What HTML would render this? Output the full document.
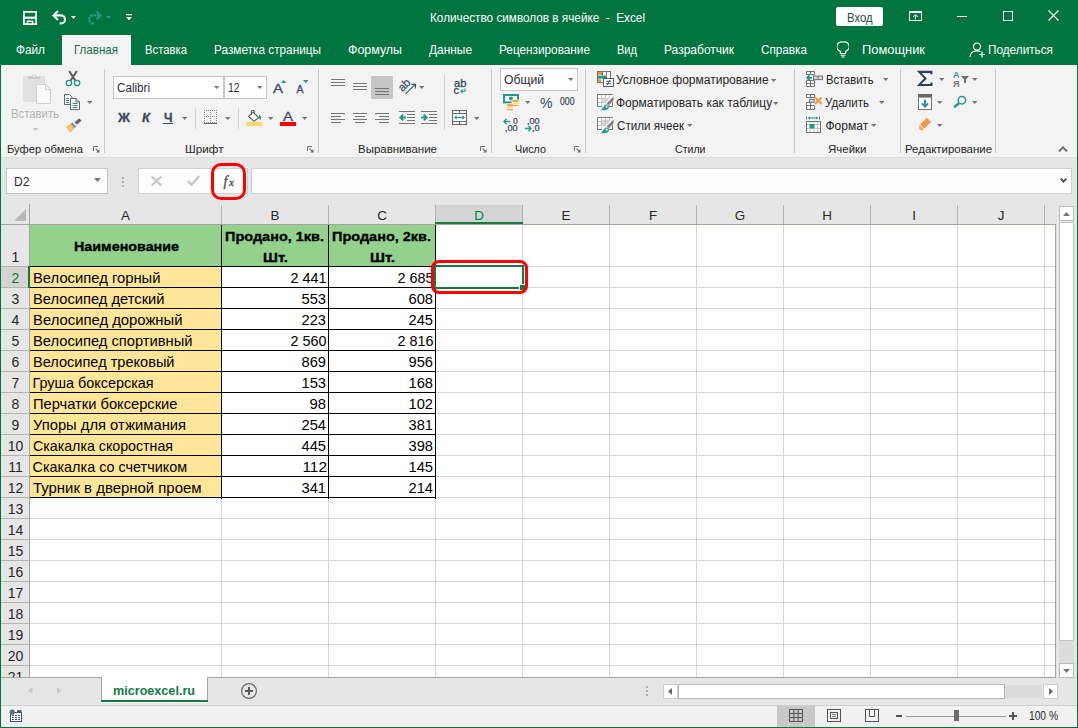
<!DOCTYPE html>
<html lang="ru"><head><meta charset="utf-8"><title>Excel</title>
<style>
html,body{margin:0;padding:0}
body{width:1078px;height:728px;overflow:hidden;position:relative;background:#e6e6e6;font-family:"Liberation Sans",sans-serif}
.a{position:absolute;display:block}
.t{position:absolute;white-space:pre;line-height:normal;display:block}
</style></head><body>
<div class="a" style="left:0px;top:0px;width:1078px;height:65px;background:#00743f;"></div>
<div class="a" style="left:1px;top:65px;width:1076px;height:93px;background:#f3f3f3;"></div>
<div class="a" style="left:1px;top:157px;width:1076px;height:1px;background:#dcdcdc;"></div>
<div class="a" style="left:62px;top:35px;width:69px;height:31px;background:#f3f3f3;"></div>
<svg class="a" style="left:23px;top:11px" width="14" height="14" viewBox="0 0 14 14"><path d="M0.9 0.9H13.1V13.1H0.9Z" fill="none" stroke="#fff" stroke-width="1.8"/><rect x="1" y="5.6" width="12" height="2.2" fill="#fff"/><path d="M4.4 13V10.2H9.6V13" fill="none" stroke="#fff" stroke-width="1.5"/></svg>
<svg class="a" style="left:52px;top:10px" width="15" height="15" viewBox="0 0 15 15"><path d="M2.4 5.4H9A4 4 0 0 1 9 13.4H7.6" fill="none" stroke="#fff" stroke-width="2.1"/><path d="M6 0.9L1.5 5.4L6 9.9" fill="none" stroke="#fff" stroke-width="2.1"/></svg>
<svg class="a" style="left:71px;top:16px" width="5" height="3" viewBox="0 0 5 3"><path d="M0 0H5L2.5 3Z" fill="#fff"/></svg>
<svg class="a" style="left:87px;top:10px" width="15" height="15" viewBox="0 0 15 15"><path d="M12.6 5.4H6A4 4 0 0 0 6 13.4H7.4" fill="none" stroke="#2c9c8a" stroke-width="2.1" stroke-dasharray="2.6 0.8"/><path d="M9.8 1.6L13.4 5.4L9.8 9.2" fill="none" stroke="#2c9c8a" stroke-width="2"/></svg>
<svg class="a" style="left:106px;top:16px" width="5" height="3" viewBox="0 0 5 3"><path d="M0 0H5L2.5 3Z" fill="#2f9f8c"/></svg>
<svg class="a" style="left:126px;top:14px" width="6" height="7" viewBox="0 0 6 7"><rect x="0" y="0" width="6" height="1.3" fill="#fff"/><path d="M0 3H6L3 6.2Z" fill="#fff"/></svg>
<span class="t" style="left:430px;top:11px;font-size:12px;color:#fff;transform:scaleX(0.9796);transform-origin:0 0;">Количество символов в ячейке  -  Excel</span>
<div class="a" style="left:836px;top:7px;width:47px;height:19px;background:#fff;border-radius:2px;"></div>
<span class="t" style="left:847px;top:11px;font-size:12.5px;color:#1e4e36;transform:scaleX(0.9017);transform-origin:0 0;">Вход</span>
<svg class="a" style="left:909px;top:10px" width="14" height="12" viewBox="0 0 14 12"><rect x="0.5" y="1.5" width="12" height="9" fill="none" stroke="#fff"/><rect x="0" y="1" width="13" height="2" fill="#fff"/><path d="M6.5 9.5V5M4.2 7L6.5 4.7L8.8 7" fill="none" stroke="#fff"/></svg>
<div class="a" style="left:957px;top:16px;width:10px;height:1px;background:#fff;"></div>
<div class="a" style="left:1003px;top:11px;width:10px;height:10px;border:1px solid #fff;box-sizing:border-box;"></div>
<svg class="a" style="left:1048px;top:10px" width="11" height="11" viewBox="0 0 11 11"><path d="M0.5 0.5L10.5 10.5M10.5 0.5L0.5 10.5" stroke="#fff" stroke-width="1.1"/></svg>
<span class="t" style="left:16px;top:42px;font-size:13px;color:#fff;transform:scaleX(0.9071);transform-origin:0 0;">Файл</span>
<span class="t" style="left:74px;top:42px;font-size:13px;color:#1e6e48;transform:scaleX(0.8892);transform-origin:0 0;">Главная</span>
<span class="t" style="left:145px;top:42px;font-size:13px;color:#fff;transform:scaleX(0.8691);transform-origin:0 0;">Вставка</span>
<span class="t" style="left:214px;top:42px;font-size:13px;color:#fff;transform:scaleX(0.9073);transform-origin:0 0;">Разметка страницы</span>
<span class="t" style="left:348px;top:42px;font-size:13px;color:#fff;transform:scaleX(0.9544);transform-origin:0 0;">Формулы</span>
<span class="t" style="left:429px;top:42px;font-size:13px;color:#fff;transform:scaleX(0.9155);transform-origin:0 0;">Данные</span>
<span class="t" style="left:499px;top:42px;font-size:13px;color:#fff;transform:scaleX(0.9065);transform-origin:0 0;">Рецензирование</span>
<span class="t" style="left:617px;top:42px;font-size:13px;color:#fff;transform:scaleX(0.8499);transform-origin:0 0;">Вид</span>
<span class="t" style="left:664px;top:42px;font-size:13px;color:#fff;transform:scaleX(0.9233);transform-origin:0 0;">Разработчик</span>
<span class="t" style="left:761px;top:42px;font-size:13px;color:#fff;transform:scaleX(0.9020);transform-origin:0 0;">Справка</span>
<span class="t" style="left:862px;top:42px;font-size:13px;color:#fff;transform:scaleX(0.9909);transform-origin:0 0;">Помощник</span>
<span class="t" style="left:988px;top:42px;font-size:13px;color:#fff;transform:scaleX(0.9053);transform-origin:0 0;">Поделиться</span>
<svg class="a" style="left:837px;top:41px" width="12" height="17" viewBox="0 0 12 17"><path d="M6 1A4.8 4.8 0 0 0 3.4 10.4V12.5H8.6V10.4A4.8 4.8 0 0 0 6 1Z" fill="none" stroke="#fff" stroke-width="1.2"/><path d="M3.6 14.3H8.4M4.4 16H7.6" stroke="#fff" stroke-width="1.1"/></svg>
<svg class="a" style="left:969px;top:42px" width="17" height="16" viewBox="0 0 17 16"><circle cx="8" cy="4.6" r="3.6" fill="none" stroke="#fff" stroke-width="1.2"/><path d="M1 15C1 11 4 8.8 8 8.8C9.5 8.8 10.5 9.1 11.5 9.7" fill="none" stroke="#fff" stroke-width="1.2"/><path d="M13 9.5V15.5M10 12.5H16" stroke="#fff" stroke-width="1.2"/></svg>
<div class="a" style="left:6px;top:168px;width:102px;height:26px;background:#fdfdfd;border:1px solid #c6c6c6;box-sizing:border-box;"></div>
<span class="t" style="left:13.5px;top:175px;font-size:12.5px;color:#2b2b3a;transform:scaleX(0.9697);transform-origin:0 0;">D2</span>
<svg class="a" style="left:94px;top:178px" width="7" height="4" viewBox="0 0 7 4"><path d="M0 0H7L3.5 4Z" fill="#777"/></svg>
<div class="a" style="left:122px;top:177px;width:2px;height:2px;background:#b0b0b0;"></div>
<div class="a" style="left:122px;top:181px;width:2px;height:2px;background:#b0b0b0;"></div>
<div class="a" style="left:122px;top:185px;width:2px;height:2px;background:#b0b0b0;"></div>
<div class="a" style="left:138px;top:168px;width:110px;height:26px;background:#fdfdfd;border:1px solid #d0d0d0;box-sizing:border-box;"></div>
<svg class="a" style="left:151px;top:176px" width="11" height="10" viewBox="0 0 11 10"><path d="M0.7 0.5L10.3 9.5M10.3 0.5L0.7 9.5" stroke="#c6c6c6" stroke-width="2"/></svg>
<svg class="a" style="left:187px;top:175px" width="13" height="11" viewBox="0 0 13 11"><path d="M0.8 6L4.6 9.8L12.2 1" fill="none" stroke="#c6c6c6" stroke-width="2.2"/></svg>
<span class="t" style="left:223.5px;top:174px;font-size:14px;color:#4a4a4a;font-style:italic;font-family:'Liberation Serif',serif;-webkit-text-stroke:0.3px #4a4a4a;">f</span>
<span class="t" style="left:229px;top:176px;font-size:11px;color:#4a4a4a;font-style:italic;font-family:'Liberation Serif',serif;-webkit-text-stroke:0.3px #4a4a4a;">x</span>
<div class="a" style="left:251px;top:168px;width:821px;height:26px;background:#fdfdfd;border:1px solid #d0d0d0;box-sizing:border-box;"></div>
<svg class="a" style="left:1060px;top:178px" width="7" height="5" viewBox="0 0 7 5"><path d="M0.6 0.6L3.5 3.7L6.4 0.6" fill="none" stroke="#505050" stroke-width="1.9"/></svg>
<div class="a" style="left:211px;top:163px;width:35px;height:37px;border:3px solid #f00;box-sizing:border-box;border-radius:10px;"></div>
<div class="a" style="left:30px;top:225px;width:1025px;height:452px;background:#fff;"></div>
<div class="a" style="left:30px;top:225px;width:405px;height:41px;background:#93d18d;"></div>
<div class="a" style="left:30px;top:267px;width:191px;height:231px;background:#ffe598;"></div>
<div class="a" style="left:1px;top:266px;width:28px;height:1px;background:#b4b4ac;"></div>
<div class="a" style="left:30px;top:266px;width:1025px;height:1px;background:#d7d7d7;"></div>
<div class="a" style="left:1px;top:287px;width:28px;height:1px;background:#b4b4ac;"></div>
<div class="a" style="left:30px;top:287px;width:1025px;height:1px;background:#d7d7d7;"></div>
<div class="a" style="left:1px;top:308px;width:28px;height:1px;background:#b4b4ac;"></div>
<div class="a" style="left:30px;top:308px;width:1025px;height:1px;background:#d7d7d7;"></div>
<div class="a" style="left:1px;top:329px;width:28px;height:1px;background:#b4b4ac;"></div>
<div class="a" style="left:30px;top:329px;width:1025px;height:1px;background:#d7d7d7;"></div>
<div class="a" style="left:1px;top:350px;width:28px;height:1px;background:#b4b4ac;"></div>
<div class="a" style="left:30px;top:350px;width:1025px;height:1px;background:#d7d7d7;"></div>
<div class="a" style="left:1px;top:371px;width:28px;height:1px;background:#b4b4ac;"></div>
<div class="a" style="left:30px;top:371px;width:1025px;height:1px;background:#d7d7d7;"></div>
<div class="a" style="left:1px;top:392px;width:28px;height:1px;background:#b4b4ac;"></div>
<div class="a" style="left:30px;top:392px;width:1025px;height:1px;background:#d7d7d7;"></div>
<div class="a" style="left:1px;top:413px;width:28px;height:1px;background:#b4b4ac;"></div>
<div class="a" style="left:30px;top:413px;width:1025px;height:1px;background:#d7d7d7;"></div>
<div class="a" style="left:1px;top:434px;width:28px;height:1px;background:#b4b4ac;"></div>
<div class="a" style="left:30px;top:434px;width:1025px;height:1px;background:#d7d7d7;"></div>
<div class="a" style="left:1px;top:455px;width:28px;height:1px;background:#b4b4ac;"></div>
<div class="a" style="left:30px;top:455px;width:1025px;height:1px;background:#d7d7d7;"></div>
<div class="a" style="left:1px;top:476px;width:28px;height:1px;background:#b4b4ac;"></div>
<div class="a" style="left:30px;top:476px;width:1025px;height:1px;background:#d7d7d7;"></div>
<div class="a" style="left:1px;top:497px;width:28px;height:1px;background:#b4b4ac;"></div>
<div class="a" style="left:30px;top:497px;width:1025px;height:1px;background:#d7d7d7;"></div>
<div class="a" style="left:1px;top:518px;width:28px;height:1px;background:#b4b4ac;"></div>
<div class="a" style="left:30px;top:518px;width:1025px;height:1px;background:#d7d7d7;"></div>
<div class="a" style="left:1px;top:539px;width:28px;height:1px;background:#b4b4ac;"></div>
<div class="a" style="left:30px;top:539px;width:1025px;height:1px;background:#d7d7d7;"></div>
<div class="a" style="left:1px;top:560px;width:28px;height:1px;background:#b4b4ac;"></div>
<div class="a" style="left:30px;top:560px;width:1025px;height:1px;background:#d7d7d7;"></div>
<div class="a" style="left:1px;top:581px;width:28px;height:1px;background:#b4b4ac;"></div>
<div class="a" style="left:30px;top:581px;width:1025px;height:1px;background:#d7d7d7;"></div>
<div class="a" style="left:1px;top:602px;width:28px;height:1px;background:#b4b4ac;"></div>
<div class="a" style="left:30px;top:602px;width:1025px;height:1px;background:#d7d7d7;"></div>
<div class="a" style="left:1px;top:623px;width:28px;height:1px;background:#b4b4ac;"></div>
<div class="a" style="left:30px;top:623px;width:1025px;height:1px;background:#d7d7d7;"></div>
<div class="a" style="left:1px;top:644px;width:28px;height:1px;background:#b4b4ac;"></div>
<div class="a" style="left:30px;top:644px;width:1025px;height:1px;background:#d7d7d7;"></div>
<div class="a" style="left:1px;top:665px;width:28px;height:1px;background:#b4b4ac;"></div>
<div class="a" style="left:30px;top:665px;width:1025px;height:1px;background:#d7d7d7;"></div>
<div class="a" style="left:221px;top:225px;width:1px;height:452px;background:#d7d7d7;"></div>
<div class="a" style="left:221px;top:205px;width:1px;height:20px;background:#b4b4ac;"></div>
<div class="a" style="left:328px;top:225px;width:1px;height:452px;background:#d7d7d7;"></div>
<div class="a" style="left:328px;top:205px;width:1px;height:20px;background:#b4b4ac;"></div>
<div class="a" style="left:435px;top:225px;width:1px;height:452px;background:#d7d7d7;"></div>
<div class="a" style="left:435px;top:205px;width:1px;height:20px;background:#b4b4ac;"></div>
<div class="a" style="left:522px;top:225px;width:1px;height:452px;background:#d7d7d7;"></div>
<div class="a" style="left:522px;top:205px;width:1px;height:20px;background:#b4b4ac;"></div>
<div class="a" style="left:609px;top:225px;width:1px;height:452px;background:#d7d7d7;"></div>
<div class="a" style="left:609px;top:205px;width:1px;height:20px;background:#b4b4ac;"></div>
<div class="a" style="left:696px;top:225px;width:1px;height:452px;background:#d7d7d7;"></div>
<div class="a" style="left:696px;top:205px;width:1px;height:20px;background:#b4b4ac;"></div>
<div class="a" style="left:783px;top:225px;width:1px;height:452px;background:#d7d7d7;"></div>
<div class="a" style="left:783px;top:205px;width:1px;height:20px;background:#b4b4ac;"></div>
<div class="a" style="left:870px;top:225px;width:1px;height:452px;background:#d7d7d7;"></div>
<div class="a" style="left:870px;top:205px;width:1px;height:20px;background:#b4b4ac;"></div>
<div class="a" style="left:957px;top:225px;width:1px;height:452px;background:#d7d7d7;"></div>
<div class="a" style="left:957px;top:205px;width:1px;height:20px;background:#b4b4ac;"></div>
<div class="a" style="left:1044px;top:225px;width:1px;height:452px;background:#d7d7d7;"></div>
<div class="a" style="left:1044px;top:205px;width:1px;height:20px;background:#b4b4ac;"></div>
<div class="a" style="left:29px;top:204px;width:1px;height:473px;background:#a5a59c;"></div>
<div class="a" style="left:1px;top:224px;width:1054px;height:1px;background:#a5a59c;"></div>
<div class="a" style="left:1055px;top:224px;width:1px;height:453px;background:#a5a59c;"></div>
<div class="a" style="left:1px;top:677px;width:1055px;height:1px;background:#a5a59c;"></div>
<svg class="a" style="left:14px;top:209px" width="12" height="12" viewBox="0 0 12 12"><path d="M12 0V12H0Z" fill="#b7b7b7"/></svg>
<div class="a" style="left:436px;top:205px;width:86px;height:19px;background:#d4d4d4;"></div>
<div class="a" style="left:435px;top:222px;width:88px;height:2px;background:#137a43;"></div>
<div class="a" style="left:1px;top:267px;width:28px;height:20px;background:#d4d4d4;"></div>
<div class="a" style="left:28px;top:266px;width:2px;height:22px;background:#137a43;"></div>
<div class="a" style="left:221px;top:225px;width:1px;height:274px;background:#000;"></div>
<div class="a" style="left:328px;top:225px;width:1px;height:274px;background:#000;"></div>
<div class="a" style="left:435px;top:225px;width:1px;height:274px;background:#000;"></div>
<div class="a" style="left:30px;top:266px;width:406px;height:1px;background:#000;"></div>
<div class="a" style="left:30px;top:287px;width:406px;height:1px;background:#000;"></div>
<div class="a" style="left:30px;top:308px;width:406px;height:1px;background:#000;"></div>
<div class="a" style="left:30px;top:329px;width:406px;height:1px;background:#000;"></div>
<div class="a" style="left:30px;top:350px;width:406px;height:1px;background:#000;"></div>
<div class="a" style="left:30px;top:371px;width:406px;height:1px;background:#000;"></div>
<div class="a" style="left:30px;top:392px;width:406px;height:1px;background:#000;"></div>
<div class="a" style="left:30px;top:413px;width:406px;height:1px;background:#000;"></div>
<div class="a" style="left:30px;top:434px;width:406px;height:1px;background:#000;"></div>
<div class="a" style="left:30px;top:455px;width:406px;height:1px;background:#000;"></div>
<div class="a" style="left:30px;top:476px;width:406px;height:1px;background:#000;"></div>
<div class="a" style="left:30px;top:497px;width:406px;height:1px;background:#000;"></div>
<span class="t" style="left:125.5px;margin-left:-250px;width:500px;text-align:center;top:208px;font-size:13.4px;color:#262626;">A</span>
<span class="t" style="left:275.0px;margin-left:-250px;width:500px;text-align:center;top:208px;font-size:13.4px;color:#262626;">B</span>
<span class="t" style="left:382.0px;margin-left:-250px;width:500px;text-align:center;top:208px;font-size:13.4px;color:#262626;">C</span>
<span class="t" style="left:479.0px;margin-left:-250px;width:500px;text-align:center;top:208px;font-size:13.4px;color:#137a43;">D</span>
<span class="t" style="left:566.0px;margin-left:-250px;width:500px;text-align:center;top:208px;font-size:13.4px;color:#262626;">E</span>
<span class="t" style="left:653.0px;margin-left:-250px;width:500px;text-align:center;top:208px;font-size:13.4px;color:#262626;">F</span>
<span class="t" style="left:740.0px;margin-left:-250px;width:500px;text-align:center;top:208px;font-size:13.4px;color:#262626;">G</span>
<span class="t" style="left:827.0px;margin-left:-250px;width:500px;text-align:center;top:208px;font-size:13.4px;color:#262626;">H</span>
<span class="t" style="left:914.0px;margin-left:-250px;width:500px;text-align:center;top:208px;font-size:13.4px;color:#262626;">I</span>
<span class="t" style="left:1001.0px;margin-left:-250px;width:500px;text-align:center;top:208px;font-size:13.4px;color:#262626;">J</span>
<span class="t" style="left:15.5px;margin-left:-250px;width:500px;text-align:center;top:249px;font-size:14px;color:#262626;">1</span>
<span class="t" style="left:15.5px;margin-left:-250px;width:500px;text-align:center;top:270px;font-size:14px;color:#137a43;">2</span>
<span class="t" style="left:15.5px;margin-left:-250px;width:500px;text-align:center;top:291px;font-size:14px;color:#262626;">3</span>
<span class="t" style="left:15.5px;margin-left:-250px;width:500px;text-align:center;top:312px;font-size:14px;color:#262626;">4</span>
<span class="t" style="left:15.5px;margin-left:-250px;width:500px;text-align:center;top:333px;font-size:14px;color:#262626;">5</span>
<span class="t" style="left:15.5px;margin-left:-250px;width:500px;text-align:center;top:354px;font-size:14px;color:#262626;">6</span>
<span class="t" style="left:15.5px;margin-left:-250px;width:500px;text-align:center;top:375px;font-size:14px;color:#262626;">7</span>
<span class="t" style="left:15.5px;margin-left:-250px;width:500px;text-align:center;top:396px;font-size:14px;color:#262626;">8</span>
<span class="t" style="left:15.5px;margin-left:-250px;width:500px;text-align:center;top:417px;font-size:14px;color:#262626;">9</span>
<span class="t" style="left:15.5px;margin-left:-250px;width:500px;text-align:center;top:438px;font-size:14px;color:#262626;">10</span>
<span class="t" style="left:15.5px;margin-left:-250px;width:500px;text-align:center;top:459px;font-size:14px;color:#262626;">11</span>
<span class="t" style="left:15.5px;margin-left:-250px;width:500px;text-align:center;top:480px;font-size:14px;color:#262626;">12</span>
<span class="t" style="left:15.5px;margin-left:-250px;width:500px;text-align:center;top:501px;font-size:14px;color:#262626;">13</span>
<span class="t" style="left:15.5px;margin-left:-250px;width:500px;text-align:center;top:522px;font-size:14px;color:#262626;">14</span>
<span class="t" style="left:15.5px;margin-left:-250px;width:500px;text-align:center;top:543px;font-size:14px;color:#262626;">15</span>
<span class="t" style="left:15.5px;margin-left:-250px;width:500px;text-align:center;top:564px;font-size:14px;color:#262626;">16</span>
<span class="t" style="left:15.5px;margin-left:-250px;width:500px;text-align:center;top:585px;font-size:14px;color:#262626;">17</span>
<span class="t" style="left:15.5px;margin-left:-250px;width:500px;text-align:center;top:606px;font-size:14px;color:#262626;">18</span>
<span class="t" style="left:15.5px;margin-left:-250px;width:500px;text-align:center;top:627px;font-size:14px;color:#262626;">19</span>
<span class="t" style="left:15.5px;margin-left:-250px;width:500px;text-align:center;top:648px;font-size:14px;color:#262626;">20</span>
<span class="t" style="left:15.5px;margin-left:-250px;width:500px;text-align:center;top:669px;font-size:14px;color:#262626;clip-path:inset(0 0 8px 0);">21</span>
<span class="t" style="left:73.5px;top:239px;font-size:13.6px;color:#000;font-weight:700;transform:scaleX(1.0528);transform-origin:0 0;-webkit-text-stroke:0.35px #000;">Наименование</span>
<span class="t" style="left:225px;top:229px;font-size:13.6px;color:#000;font-weight:700;transform:scaleX(1.0651);transform-origin:0 0;-webkit-text-stroke:0.35px #000;">Продано, 1кв.</span>
<span class="t" style="left:262.5px;top:250px;font-size:13.6px;color:#000;font-weight:700;transform:scaleX(1.0914);transform-origin:0 0;-webkit-text-stroke:0.35px #000;">Шт.</span>
<span class="t" style="left:332px;top:229px;font-size:13.6px;color:#000;font-weight:700;transform:scaleX(1.0651);transform-origin:0 0;-webkit-text-stroke:0.35px #000;">Продано, 2кв.</span>
<span class="t" style="left:370px;top:250px;font-size:13.6px;color:#000;font-weight:700;transform:scaleX(1.0914);transform-origin:0 0;-webkit-text-stroke:0.35px #000;">Шт.</span>
<span class="t" style="left:32.5px;top:270px;font-size:14.4px;color:#000;transform:scaleX(1.0277);transform-origin:0 0;">Велосипед горный</span>
<span class="t" style="right:751.5px;top:270px;font-size:14.4px;color:#000;">2 441</span>
<span class="t" style="right:644.5px;top:270px;font-size:14.4px;color:#000;">2 685</span>
<span class="t" style="left:32.5px;top:291px;font-size:14.4px;color:#000;transform:scaleX(1.0216);transform-origin:0 0;">Велосипед детский</span>
<span class="t" style="right:751.5px;top:291px;font-size:14.4px;color:#000;transform:scaleX(1.0202);transform-origin:100% 0;">553</span>
<span class="t" style="right:644.5px;top:291px;font-size:14.4px;color:#000;transform:scaleX(1.0202);transform-origin:100% 0;">608</span>
<span class="t" style="left:32.5px;top:312px;font-size:14.4px;color:#000;transform:scaleX(1.0310);transform-origin:0 0;">Велосипед дорожный</span>
<span class="t" style="right:751.5px;top:312px;font-size:14.4px;color:#000;transform:scaleX(1.0202);transform-origin:100% 0;">223</span>
<span class="t" style="right:644.5px;top:312px;font-size:14.4px;color:#000;transform:scaleX(1.0202);transform-origin:100% 0;">245</span>
<span class="t" style="left:32.5px;top:333px;font-size:14.4px;color:#000;transform:scaleX(1.0219);transform-origin:0 0;">Велосипед спортивный</span>
<span class="t" style="right:751.5px;top:333px;font-size:14.4px;color:#000;">2 560</span>
<span class="t" style="right:644.5px;top:333px;font-size:14.4px;color:#000;">2 816</span>
<span class="t" style="left:32.5px;top:354px;font-size:14.4px;color:#000;transform:scaleX(1.0115);transform-origin:0 0;">Велосипед трековый</span>
<span class="t" style="right:751.5px;top:354px;font-size:14.4px;color:#000;transform:scaleX(1.0202);transform-origin:100% 0;">869</span>
<span class="t" style="right:644.5px;top:354px;font-size:14.4px;color:#000;transform:scaleX(1.0202);transform-origin:100% 0;">956</span>
<span class="t" style="left:32.5px;top:375px;font-size:14.4px;color:#000;">Груша боксерская</span>
<span class="t" style="right:751.5px;top:375px;font-size:14.4px;color:#000;transform:scaleX(1.0202);transform-origin:100% 0;">153</span>
<span class="t" style="right:644.5px;top:375px;font-size:14.4px;color:#000;transform:scaleX(1.0202);transform-origin:100% 0;">168</span>
<span class="t" style="left:32.5px;top:396px;font-size:14.4px;color:#000;transform:scaleX(1.0205);transform-origin:0 0;">Перчатки боксерские</span>
<span class="t" style="right:751.5px;top:396px;font-size:14.4px;color:#000;transform:scaleX(1.0302);transform-origin:100% 0;">98</span>
<span class="t" style="right:644.5px;top:396px;font-size:14.4px;color:#000;transform:scaleX(1.0202);transform-origin:100% 0;">102</span>
<span class="t" style="left:32.5px;top:417px;font-size:14.4px;color:#000;transform:scaleX(1.0246);transform-origin:0 0;">Упоры для отжимания</span>
<span class="t" style="right:751.5px;top:417px;font-size:14.4px;color:#000;transform:scaleX(1.0202);transform-origin:100% 0;">254</span>
<span class="t" style="right:644.5px;top:417px;font-size:14.4px;color:#000;transform:scaleX(1.0202);transform-origin:100% 0;">381</span>
<span class="t" style="left:32.5px;top:438px;font-size:14.4px;color:#000;transform:scaleX(0.9871);transform-origin:0 0;">Скакалка скоростная</span>
<span class="t" style="right:751.5px;top:438px;font-size:14.4px;color:#000;transform:scaleX(1.0202);transform-origin:100% 0;">445</span>
<span class="t" style="right:644.5px;top:438px;font-size:14.4px;color:#000;transform:scaleX(1.0202);transform-origin:100% 0;">398</span>
<span class="t" style="left:32.5px;top:459px;font-size:14.4px;color:#000;">Скакалка со счетчиком</span>
<span class="t" style="right:751.5px;top:459px;font-size:14.4px;color:#000;transform:scaleX(1.0674);transform-origin:100% 0;">112</span>
<span class="t" style="right:644.5px;top:459px;font-size:14.4px;color:#000;transform:scaleX(1.0202);transform-origin:100% 0;">145</span>
<span class="t" style="left:32.5px;top:480px;font-size:14.4px;color:#000;transform:scaleX(1.0368);transform-origin:0 0;">Турник в дверной проем</span>
<span class="t" style="right:751.5px;top:480px;font-size:14.4px;color:#000;transform:scaleX(1.0202);transform-origin:100% 0;">341</span>
<span class="t" style="right:644.5px;top:480px;font-size:14.4px;color:#000;transform:scaleX(1.0202);transform-origin:100% 0;">214</span>
<div class="a" style="left:434px;top:265px;width:90px;height:24px;border:2px solid #137a43;box-sizing:border-box;"></div>
<div class="a" style="left:519px;top:284px;width:7px;height:7px;background:#137a43;border:1px solid #fff;box-sizing:border-box;"></div>
<div class="a" style="left:431px;top:260px;width:97px;height:34px;border:3px solid #f00;box-sizing:border-box;border-radius:8px;"></div>
<div class="a" style="left:1059px;top:206px;width:15px;height:15px;background:#fff;border:1px solid #bcbcbc;box-sizing:border-box;"></div>
<svg class="a" style="left:1063px;top:212px" width="7" height="4" viewBox="0 0 7 4"><path d="M0 4H7L3.5 0Z" fill="#777"/></svg>
<div class="a" style="left:1059px;top:222px;width:15px;height:419px;background:#fff;border:1px solid #c4c4c4;box-sizing:border-box;"></div>
<div class="a" style="left:1059px;top:641px;width:15px;height:22px;background:#dcdcdc;"></div>
<div class="a" style="left:1059px;top:663px;width:15px;height:15px;background:#fff;border:1px solid #bcbcbc;box-sizing:border-box;"></div>
<svg class="a" style="left:1063px;top:669px" width="7" height="4" viewBox="0 0 7 4"><path d="M0 0H7L3.5 4Z" fill="#777"/></svg>
<div class="a" style="left:1px;top:678px;width:1076px;height:27px;background:#e6e6e6;"></div>
<svg class="a" style="left:28px;top:687px" width="5" height="7" viewBox="0 0 5 7"><path d="M4.5 0V7L0 3.5Z" fill="#c9c9c9"/></svg>
<svg class="a" style="left:57px;top:687px" width="5" height="7" viewBox="0 0 5 7"><path d="M0 0V7L4.5 3.5Z" fill="#c9c9c9"/></svg>
<div class="a" style="left:101px;top:677px;width:107px;height:26px;background:#fff;"></div>
<div class="a" style="left:101px;top:677px;width:1px;height:24px;background:#a5a59c;"></div>
<div class="a" style="left:207px;top:677px;width:1px;height:24px;background:#a5a59c;"></div>
<div class="a" style="left:101px;top:700px;width:107px;height:2px;background:#137a43;"></div>
<span class="t" style="left:113px;top:683px;font-size:13.4px;color:#137a43;font-weight:700;transform:scaleX(0.9415);transform-origin:0 0;">microexcel.ru</span>
<svg class="a" style="left:240px;top:682px" width="18" height="18" viewBox="0 0 18 18"><circle cx="9" cy="9" r="7.4" fill="none" stroke="#6a6a6a" stroke-width="1.2"/><path d="M9 5V13M5 9H13" stroke="#5a5a5a" stroke-width="2"/></svg>
<div class="a" style="left:646px;top:686px;width:2px;height:2px;background:#b0b0b0;"></div>
<div class="a" style="left:646px;top:690px;width:2px;height:2px;background:#b0b0b0;"></div>
<div class="a" style="left:646px;top:694px;width:2px;height:2px;background:#b0b0b0;"></div>
<div class="a" style="left:663px;top:684px;width:15px;height:15px;background:#fff;border:1px solid #cfcfcf;box-sizing:border-box;"></div>
<svg class="a" style="left:668px;top:688px" width="4" height="7" viewBox="0 0 4 7"><path d="M4 0V7L0 3.5Z" fill="#666"/></svg>
<div class="a" style="left:678px;top:684px;width:327px;height:15px;background:#fff;border:1px solid #b9b9b9;box-sizing:border-box;"></div>
<div class="a" style="left:1005px;top:685px;width:37px;height:13px;background:#dcdcdc;"></div>
<div class="a" style="left:1043px;top:684px;width:15px;height:15px;background:#fff;border:1px solid #cfcfcf;box-sizing:border-box;"></div>
<svg class="a" style="left:1049px;top:688px" width="4" height="7" viewBox="0 0 4 7"><path d="M0 0V7L4 3.5Z" fill="#666"/></svg>
<div class="a" style="left:1px;top:705px;width:1076px;height:1px;background:#cfcfcf;"></div>
<div class="a" style="left:1px;top:706px;width:1076px;height:21px;background:#f1f1f1;"></div>
<svg class="a" style="left:9px;top:709px" width="14" height="14" viewBox="0 0 14 14"><rect x="1.5" y="3.5" width="11" height="9" fill="#fff" stroke="#44546a"/><path d="M3 6.5H11M3 8.5H11M3 10.5H11" stroke="#44546a" stroke-width="1" stroke-dasharray="2 1"/><circle cx="3.2" cy="3.2" r="2.6" fill="#5b6b80"/><rect x="8" y="1.2" width="4.5" height="2" fill="#44546a"/></svg>
<div class="a" style="left:777px;top:706px;width:38px;height:21px;background:#c8c8c8;"></div>
<svg class="a" style="left:789px;top:709px" width="14" height="13" viewBox="0 0 14 13"><rect x="0.5" y="0.5" width="13" height="12" fill="none" stroke="#555"/><path d="M0.5 4.5H13.5M0.5 8.5H13.5M4.8 0.5V12.5M9.2 0.5V12.5" stroke="#555" stroke-width="1"/></svg>
<svg class="a" style="left:827px;top:709px" width="14" height="13" viewBox="0 0 14 13"><rect x="0.5" y="0.5" width="13" height="12" fill="none" stroke="#555"/><rect x="3.5" y="3.5" width="7" height="6" fill="none" stroke="#555"/><path d="M5 5.5H9M5 7.5H9" stroke="#555" stroke-width="0.8"/></svg>
<svg class="a" style="left:865px;top:709px" width="14" height="13" viewBox="0 0 14 13"><rect x="0.5" y="0.5" width="13" height="12" fill="none" stroke="#555"/><path d="M4.5 0.5V7.5H9.5V0.5" fill="none" stroke="#555"/></svg>
<div class="a" style="left:896px;top:715px;width:6px;height:2px;background:#555;"></div>
<div class="a" style="left:906px;top:716px;width:100px;height:1px;background:#9a9a9a;"></div>
<div class="a" style="left:954px;top:710px;width:5px;height:11px;background:#6c6c6c;"></div>
<div class="a" style="left:1009px;top:715px;width:8px;height:2px;background:#555;"></div>
<div class="a" style="left:1012px;top:712px;width:2px;height:8px;background:#555;"></div>
<span class="t" style="left:1028.5px;top:709px;font-size:12px;color:#262626;transform:scaleX(0.8522);transform-origin:0 0;">100 %</span>
<div class="a" style="left:104px;top:69px;width:1px;height:84px;background:#c8c8c8;"></div>
<div class="a" style="left:318px;top:69px;width:1px;height:84px;background:#c8c8c8;"></div>
<div class="a" style="left:491px;top:69px;width:1px;height:84px;background:#c8c8c8;"></div>
<div class="a" style="left:585px;top:69px;width:1px;height:84px;background:#c8c8c8;"></div>
<div class="a" style="left:794px;top:69px;width:1px;height:84px;background:#c8c8c8;"></div>
<div class="a" style="left:900px;top:69px;width:1px;height:84px;background:#c8c8c8;"></div>
<div class="a" style="left:995px;top:69px;width:1px;height:84px;background:#c8c8c8;"></div>
<div class="a" style="left:444px;top:75px;width:1px;height:55px;background:#d5d5d5;"></div>
<span class="t" style="left:6.5px;top:142px;font-size:11.8px;color:#262626;transform:scaleX(0.9480);transform-origin:0 0;">Буфер обмена</span>
<span class="t" style="left:184.5px;top:142px;font-size:11.8px;color:#262626;transform:scaleX(0.9919);transform-origin:0 0;">Шрифт</span>
<span class="t" style="left:357.5px;top:142px;font-size:11.8px;color:#262626;transform:scaleX(0.9729);transform-origin:0 0;">Выравнивание</span>
<span class="t" style="left:514.5px;top:142px;font-size:11.8px;color:#262626;transform:scaleX(0.9134);transform-origin:0 0;">Число</span>
<span class="t" style="left:675px;top:142px;font-size:11.8px;color:#262626;transform:scaleX(0.8971);transform-origin:0 0;">Стили</span>
<span class="t" style="left:827.5px;top:142px;font-size:11.8px;color:#262626;transform:scaleX(0.9728);transform-origin:0 0;">Ячейки</span>
<span class="t" style="left:904.5px;top:142px;font-size:11.8px;color:#262626;transform:scaleX(0.9680);transform-origin:0 0;">Редактирование</span>
<svg class="a" style="left:93px;top:146px" width="7" height="7" viewBox="0 0 7 7"><path d="M0.5 5V0.5H5" fill="none" stroke="#727272" stroke-width="1"/><path d="M2.6 2.6L6 6" stroke="#727272" stroke-width="1.1"/><path d="M6.5 3V6.5H3Z" fill="#727272"/></svg>
<svg class="a" style="left:307px;top:146px" width="7" height="7" viewBox="0 0 7 7"><path d="M0.5 5V0.5H5" fill="none" stroke="#727272" stroke-width="1"/><path d="M2.6 2.6L6 6" stroke="#727272" stroke-width="1.1"/><path d="M6.5 3V6.5H3Z" fill="#727272"/></svg>
<svg class="a" style="left:480px;top:146px" width="7" height="7" viewBox="0 0 7 7"><path d="M0.5 5V0.5H5" fill="none" stroke="#727272" stroke-width="1"/><path d="M2.6 2.6L6 6" stroke="#727272" stroke-width="1.1"/><path d="M6.5 3V6.5H3Z" fill="#727272"/></svg>
<svg class="a" style="left:574px;top:146px" width="7" height="7" viewBox="0 0 7 7"><path d="M0.5 5V0.5H5" fill="none" stroke="#727272" stroke-width="1"/><path d="M2.6 2.6L6 6" stroke="#727272" stroke-width="1.1"/><path d="M6.5 3V6.5H3Z" fill="#727272"/></svg>
<svg class="a" style="left:1058px;top:146px" width="10" height="6" viewBox="0 0 10 6"><path d="M0.9 5.4L5 1.3L9.1 5.4" fill="none" stroke="#727272" stroke-width="2"/></svg>
<svg class="a" style="left:22px;top:73px" width="30" height="31" viewBox="0 0 30 31"><rect x="1" y="3" width="22" height="26" fill="#e1e1e1"/>
<path d="M6 6V3.5H9.3A2.8 2.8 0 0 1 14.7 3.5H18V6Z" fill="#c9c9c9"/><circle cx="12" cy="3.2" r="1.1" fill="#f3f3f3"/>
<path d="M14.5 11.5H23.5L28.5 16.5V30.5H14.5Z" fill="#fbfbfb" stroke="#cfcfcf"/><path d="M23.5 11.5V16.5H28.5" fill="none" stroke="#cfcfcf"/></svg>
<span class="t" style="left:11px;top:107px;font-size:12px;color:#b3b3b3;transform:scaleX(0.9435);transform-origin:0 0;">Вставить</span>
<svg class="a" style="left:33px;top:128px" width="5.4" height="3" viewBox="0 0 5.4 3"><path d="M0 0H5.4L2.7 3Z" fill="#c4c4c4"/></svg>
<svg class="a" style="left:65px;top:70px" width="16" height="17" viewBox="0 0 16 17"><path d="M4.2 1L10.6 11M11.8 1L5.4 11" stroke="#5c5c5c" stroke-width="2" fill="none"/>
<circle cx="3.9" cy="13" r="2.7" fill="none" stroke="#1e9b8c" stroke-width="1.3"/><circle cx="12.1" cy="13" r="2.7" fill="none" stroke="#1e9b8c" stroke-width="1.3"/></svg>
<svg class="a" style="left:64px;top:94px" width="17" height="16" viewBox="0 0 17 16"><path d="M0.5 0.5H5.5L8 3V10.5H0.5Z" fill="#fff" stroke="#666"/><path d="M2 4.5H5M2 6.5H5M2 8.5H5" stroke="#1e9b8c" stroke-width="1"/>
<path d="M6.5 4.5H12L15.5 8V15.5H6.5Z" fill="#fff" stroke="#666"/><path d="M12 4.5V8H15.5" fill="none" stroke="#666"/><path d="M8.5 9.5H13.5M8.5 11.5H13.5M8.5 13.5H13.5" stroke="#1e9b8c" stroke-width="1"/></svg>
<svg class="a" style="left:87px;top:101px" width="5.4" height="3" viewBox="0 0 5.4 3"><path d="M0 0H5.4L2.7 3Z" fill="#777777"/></svg>
<svg class="a" style="left:65px;top:117px" width="18" height="16" viewBox="0 0 18 16"><path d="M9.5 5.2L14.2 1.2L16.6 3.8L11.8 7.8Z" fill="#6a6a6a"/><path d="M7.2 5.6L11.2 9.6L9.4 11.2L5.6 7.2Z" fill="#8a8a8a"/>
<path d="M5.2 7L9.4 11.4L5.5 15.5L0.8 9.8Z" fill="#f8b64a"/><path d="M2.2 9.4L6.6 14M3.6 8.4L8 12.8" stroke="#fde3a8" stroke-width="0.8"/></svg>
<div class="a" style="left:113px;top:76px;width:111px;height:23px;background:#fff;border:1px solid #c6c6c6;box-sizing:border-box;"></div>
<div class="a" style="left:224px;top:76px;width:43px;height:23px;background:#fff;border:1px solid #c6c6c6;box-sizing:border-box;"></div>
<span class="t" style="left:116.5px;top:81px;font-size:12.5px;color:#2b2b3a;transform:scaleX(0.9312);transform-origin:0 0;">Calibri</span>
<span class="t" style="left:228px;top:81px;font-size:12.5px;color:#2b2b3a;transform:scaleX(0.8270);transform-origin:0 0;">12</span>
<svg class="a" style="left:214px;top:86px" width="5.4" height="3" viewBox="0 0 5.4 3"><path d="M0 0H5.4L2.7 3Z" fill="#777777"/></svg>
<svg class="a" style="left:257px;top:86px" width="5.4" height="3" viewBox="0 0 5.4 3"><path d="M0 0H5.4L2.7 3Z" fill="#777777"/></svg>
<span class="t" style="left:273px;top:81px;font-size:13.5px;color:#3b4c60;transform:scaleX(1.1092);transform-origin:0 0;-webkit-text-stroke:0.3px #3b4c60;">A</span>
<svg class="a" style="left:281px;top:80px" width="5.4" height="3" viewBox="0 0 5.4 3"><path d="M0 3H5.4L2.7 0Z" fill="#1e9b8c"/></svg>
<span class="t" style="left:296.5px;top:83px;font-size:10.5px;color:#3b4c60;-webkit-text-stroke:0.3px #3b4c60;">A</span>
<svg class="a" style="left:303px;top:80px" width="5.4" height="3" viewBox="0 0 5.4 3"><path d="M0 0H5.4L2.7 3Z" fill="#1e9b8c"/></svg>
<span class="t" style="left:118px;top:111px;font-size:12.5px;color:#3b4c60;font-weight:700;transform:scaleX(1.0608);transform-origin:0 0;-webkit-text-stroke:0.3px #3b4c60;">Ж</span>
<span class="t" style="left:141.5px;top:111px;font-size:12.5px;color:#3b4c60;font-weight:700;font-style:italic;transform:scaleX(1.0407);transform-origin:0 0;-webkit-text-stroke:0.3px #3b4c60;">К</span>
<span class="t" style="left:163.5px;top:111px;font-size:12.5px;color:#3b4c60;font-weight:700;transform:scaleX(0.9663);transform-origin:0 0;-webkit-text-stroke:0.3px #3b4c60;">Ч</span>
<div class="a" style="left:163px;top:123px;width:10px;height:1px;background:#3b4c60;"></div>
<svg class="a" style="left:182px;top:117px" width="5.4" height="3" viewBox="0 0 5.4 3"><path d="M0 0H5.4L2.7 3Z" fill="#777777"/></svg>
<div class="a" style="left:195px;top:108px;width:1px;height:21px;background:#d5d5d5;"></div>
<svg class="a" style="left:204px;top:110px" width="14" height="14" viewBox="0 0 14 14"><g fill="#8c8c8c" shape-rendering="crispEdges"><rect x="0" y="0" width="1" height="1"/><rect x="2" y="0" width="1" height="1"/><rect x="4" y="0" width="1" height="1"/><rect x="6" y="0" width="1" height="1"/><rect x="8" y="0" width="1" height="1"/><rect x="10" y="0" width="1" height="1"/><rect x="12" y="0" width="1" height="1"/><rect x="0" y="6" width="1" height="1"/><rect x="2" y="6" width="1" height="1"/><rect x="4" y="6" width="1" height="1"/><rect x="6" y="6" width="1" height="1"/><rect x="8" y="6" width="1" height="1"/><rect x="10" y="6" width="1" height="1"/><rect x="12" y="6" width="1" height="1"/><rect x="0" y="12" width="1" height="1"/><rect x="2" y="12" width="1" height="1"/><rect x="4" y="12" width="1" height="1"/><rect x="6" y="12" width="1" height="1"/><rect x="8" y="12" width="1" height="1"/><rect x="10" y="12" width="1" height="1"/><rect x="12" y="12" width="1" height="1"/><rect x="0" y="0" width="1" height="1"/><rect x="0" y="2" width="1" height="1"/><rect x="0" y="4" width="1" height="1"/><rect x="0" y="6" width="1" height="1"/><rect x="0" y="8" width="1" height="1"/><rect x="0" y="10" width="1" height="1"/><rect x="0" y="12" width="1" height="1"/><rect x="6" y="0" width="1" height="1"/><rect x="6" y="2" width="1" height="1"/><rect x="6" y="4" width="1" height="1"/><rect x="6" y="6" width="1" height="1"/><rect x="6" y="8" width="1" height="1"/><rect x="6" y="10" width="1" height="1"/><rect x="6" y="12" width="1" height="1"/><rect x="12" y="0" width="1" height="1"/><rect x="12" y="2" width="1" height="1"/><rect x="12" y="4" width="1" height="1"/><rect x="12" y="6" width="1" height="1"/><rect x="12" y="8" width="1" height="1"/><rect x="12" y="10" width="1" height="1"/><rect x="12" y="12" width="1" height="1"/><rect x="0" y="13" width="13" height="1" fill="#666"/></g></svg>
<svg class="a" style="left:225px;top:117px" width="5.4" height="3" viewBox="0 0 5.4 3"><path d="M0 0H5.4L2.7 3Z" fill="#777777"/></svg>
<div class="a" style="left:238px;top:108px;width:1px;height:21px;background:#d5d5d5;"></div>
<svg class="a" style="left:246px;top:109px" width="17" height="17" viewBox="0 0 17 17"><path d="M13.2 5.8C14.9 6.6 15.6 8.6 14.6 11L12.6 9Z" fill="#1e9b8c"/>
<path d="M7.2 3.2L12.8 8.8L8 12.4L2.6 7.2Z" fill="#fff" stroke="#5d5d5d" stroke-width="1.1"/>
<path d="M5.4 6V1.6H8.2V4" fill="none" stroke="#5d5d5d" stroke-width="1"/>
<rect x="0" y="13" width="16" height="4" fill="#ffd966"/></svg>
<svg class="a" style="left:268px;top:117px" width="5.4" height="3" viewBox="0 0 5.4 3"><path d="M0 0H5.4L2.7 3Z" fill="#777777"/></svg>
<span class="t" style="left:283px;top:109px;font-size:13px;color:#3b4c60;transform:scaleX(1.1532);transform-origin:0 0;-webkit-text-stroke:0.3px #3b4c60;">A</span>
<div class="a" style="left:280px;top:122px;width:16px;height:4px;background:#f00;"></div>
<svg class="a" style="left:302px;top:117px" width="5.4" height="3" viewBox="0 0 5.4 3"><path d="M0 0H5.4L2.7 3Z" fill="#777777"/></svg>
<div class="a" style="left:331px;top:79px;width:14px;height:1px;background:#757575;"></div>
<div class="a" style="left:331px;top:82px;width:14px;height:1px;background:#757575;"></div>
<div class="a" style="left:331px;top:85px;width:14px;height:1px;background:#757575;"></div>
<div class="a" style="left:353px;top:83px;width:14px;height:1px;background:#757575;"></div>
<div class="a" style="left:353px;top:86px;width:14px;height:1px;background:#757575;"></div>
<div class="a" style="left:353px;top:89px;width:14px;height:1px;background:#757575;"></div>
<div class="a" style="left:371px;top:76px;width:22px;height:23px;background:#c6c6c6;"></div>
<div class="a" style="left:375px;top:88px;width:14px;height:1px;background:#757575;"></div>
<div class="a" style="left:375px;top:91px;width:14px;height:1px;background:#757575;"></div>
<div class="a" style="left:375px;top:94px;width:14px;height:1px;background:#757575;"></div>
<div class="a" style="left:331px;top:113px;width:14px;height:1px;background:#757575;"></div>
<div class="a" style="left:331px;top:116px;width:10px;height:1px;background:#757575;"></div>
<div class="a" style="left:331px;top:119px;width:14px;height:1px;background:#757575;"></div>
<div class="a" style="left:331px;top:122px;width:10px;height:1px;background:#757575;"></div>
<div class="a" style="left:353px;top:113px;width:14px;height:1px;background:#757575;"></div>
<div class="a" style="left:355px;top:116px;width:10px;height:1px;background:#757575;"></div>
<div class="a" style="left:353px;top:119px;width:14px;height:1px;background:#757575;"></div>
<div class="a" style="left:355px;top:122px;width:10px;height:1px;background:#757575;"></div>
<div class="a" style="left:375px;top:113px;width:14px;height:1px;background:#757575;"></div>
<div class="a" style="left:379px;top:116px;width:10px;height:1px;background:#757575;"></div>
<div class="a" style="left:375px;top:119px;width:14px;height:1px;background:#757575;"></div>
<div class="a" style="left:379px;top:122px;width:10px;height:1px;background:#757575;"></div>
<div class="a" style="left:399px;top:111px;width:16px;height:1px;background:#757575;"></div>
<div class="a" style="left:407px;top:114px;width:8px;height:1px;background:#757575;"></div>
<div class="a" style="left:407px;top:117px;width:8px;height:1px;background:#757575;"></div>
<div class="a" style="left:407px;top:120px;width:8px;height:1px;background:#757575;"></div>
<div class="a" style="left:399px;top:123px;width:16px;height:1px;background:#757575;"></div>
<div class="a" style="left:421px;top:111px;width:16px;height:1px;background:#757575;"></div>
<div class="a" style="left:429px;top:114px;width:8px;height:1px;background:#757575;"></div>
<div class="a" style="left:429px;top:117px;width:8px;height:1px;background:#757575;"></div>
<div class="a" style="left:429px;top:120px;width:8px;height:1px;background:#757575;"></div>
<div class="a" style="left:421px;top:123px;width:16px;height:1px;background:#757575;"></div>
<svg class="a" style="left:399px;top:113px" width="7" height="9" viewBox="0 0 7 9"><path d="M7 4.5H1.6M4.2 1.6L1.3 4.5L4.2 7.4" fill="none" stroke="#1e9b8c" stroke-width="2"/></svg>
<svg class="a" style="left:421px;top:113px" width="7" height="9" viewBox="0 0 7 9"><path d="M0 4.5H5.4M2.8 1.6L5.7 4.5L2.8 7.4" fill="none" stroke="#1e9b8c" stroke-width="2"/></svg>
<div class="a" style="left:395.5px;top:77.5px;width:16px;height:14px;transform:rotate(-45deg);font-size:11.5px;line-height:14px;color:#3b4c60;letter-spacing:-0.2px;text-align:center;-webkit-text-stroke:0.25px #3b4c60">ab</div>
<svg class="a" style="left:404px;top:83px" width="13" height="12" viewBox="0 0 13 12"><path d="M1.5 10.8L11 1.6" stroke="#3b4c60" stroke-width="1.1"/><path d="M7.4 1.4H11.4V5.4" fill="none" stroke="#3b4c60" stroke-width="1.1"/></svg>
<svg class="a" style="left:419px;top:86px" width="5.4" height="3" viewBox="0 0 5.4 3"><path d="M0 0H5.4L2.7 3Z" fill="#777777"/></svg>
<span class="t" style="left:453.5px;top:77px;font-size:11px;color:#3b4c60;transform:scaleX(1.0204);transform-origin:0 0;-webkit-text-stroke:0.3px #3b4c60;">ab</span>
<span class="t" style="left:453.5px;top:84px;font-size:11px;color:#3b4c60;-webkit-text-stroke:0.3px #3b4c60;">c</span>
<svg class="a" style="left:460px;top:88px" width="6" height="6" viewBox="0 0 6 6"><path d="M5 0.5V3.2H1.2M2.8 1.4L1 3.2L2.8 5" fill="none" stroke="#1e9b8c" stroke-width="1.1"/></svg>
<svg class="a" style="left:452px;top:110px" width="15" height="15" viewBox="0 0 15 15"><rect x="0.5" y="0.5" width="14" height="14" fill="#fff" stroke="#696969" stroke-width="1.2"/><path d="M0 3.5H15M0 11.5H15M7.5 0V3.5M7.5 11.5V15" stroke="#696969" stroke-width="1.1"/>
<path d="M3 7.5H12M4.6 5.8L2.8 7.5L4.6 9.2M10.4 5.8L12.2 7.5L10.4 9.2" fill="none" stroke="#1e9b8c" stroke-width="1.1"/></svg>
<svg class="a" style="left:474px;top:117px" width="5.4" height="3" viewBox="0 0 5.4 3"><path d="M0 0H5.4L2.7 3Z" fill="#777777"/></svg>
<div class="a" style="left:500px;top:68px;width:78px;height:23px;background:#fff;border:1px solid #c6c6c6;box-sizing:border-box;"></div>
<span class="t" style="left:503.5px;top:73px;font-size:12.5px;color:#2b2b3a;transform:scaleX(0.9723);transform-origin:0 0;">Общий</span>
<svg class="a" style="left:568px;top:78px" width="5.4" height="3" viewBox="0 0 5.4 3"><path d="M0 0H5.4L2.7 3Z" fill="#777777"/></svg>
<svg class="a" style="left:503px;top:94px" width="17" height="17" viewBox="0 0 17 17"><rect x="1" y="1" width="14" height="7.4" fill="#fff" stroke="#1e9b8c" stroke-width="2"/><circle cx="8" cy="4.6" r="2" fill="#1e9b8c"/>
<rect x="8.6" y="5.6" width="8" height="7.6" fill="#f3f3f3"/><rect x="3" y="9.6" width="8" height="7.4" fill="#f3f3f3"/>
<g fill="#f6a53a"><ellipse cx="12.6" cy="7" rx="3.4" ry="1.2"/><rect x="9.6" y="9" width="6" height="1.1" fill="#fbd27a"/><rect x="9.6" y="11" width="6" height="1.1"/>
<ellipse cx="7" cy="11.2" rx="3.4" ry="1.2"/><rect x="4" y="13.2" width="6" height="1.1" fill="#fbd27a"/><rect x="4" y="15.2" width="6" height="1.1"/></g></svg>
<svg class="a" style="left:525px;top:101px" width="5.4" height="3" viewBox="0 0 5.4 3"><path d="M0 0H5.4L2.7 3Z" fill="#777777"/></svg>
<span class="t" style="left:539.5px;top:94px;font-size:15px;color:#3b4c60;transform:scaleX(0.9368);transform-origin:0 0;">%</span>
<span class="t" style="left:559.5px;top:95px;font-size:10.5px;color:#3b4c60;transform:scaleX(0.8271);transform-origin:0 0;-webkit-text-stroke:0.25px #3b4c60;">000</span>
<span class="t" style="left:512.5px;top:116px;font-size:9px;color:#3b4c60;transform:scaleX(0.9371);transform-origin:0 0;-webkit-text-stroke:0.25px #3b4c60;">0</span>
<span class="t" style="left:504.5px;top:123px;font-size:9px;color:#3b4c60;transform:scaleX(1.0147);transform-origin:0 0;-webkit-text-stroke:0.25px #3b4c60;">,00</span>
<svg class="a" style="left:503px;top:118px" width="7" height="7" viewBox="0 0 7 7"><path d="M7 3.5H1.2M3.6 0.8L1 3.5L3.6 6.2" fill="none" stroke="#1e9b8c" stroke-width="1.3"/></svg>
<span class="t" style="left:526.8px;top:116px;font-size:9px;color:#3b4c60;transform:scaleX(1.0147);transform-origin:0 0;-webkit-text-stroke:0.25px #3b4c60;">,00</span>
<span class="t" style="left:531.8px;top:123px;font-size:9px;color:#3b4c60;transform:scaleX(1.0245);transform-origin:0 0;-webkit-text-stroke:0.25px #3b4c60;">,0</span>
<svg class="a" style="left:525px;top:125px" width="7" height="7" viewBox="0 0 7 7"><path d="M0 3.5H5.8M3.4 0.8L6 3.5L3.4 6.2" fill="none" stroke="#1e9b8c" stroke-width="1.3"/></svg>
<svg class="a" style="left:597px;top:71px" width="17" height="16" viewBox="0 0 17 16"><rect x="0.5" y="0.5" width="13" height="11" fill="#fff" stroke="#727272"/><rect x="1" y="1" width="4.5" height="3" fill="#f4923c"/><rect x="1" y="4.6" width="9" height="3" fill="#1e9b8c"/><rect x="1" y="8.2" width="3" height="3" fill="#f4923c"/>
<path d="M5.5 0.5V4.5M9.5 0.5V4.5" stroke="#727272"/><rect x="6.5" y="7.5" width="10" height="8" fill="#fff" stroke="#5d5d5d"/><path d="M9 10.3H14M9 12.7H14M13 9L10 14" stroke="#3b4c60" stroke-width="0.9"/></svg>
<svg class="a" style="left:597px;top:94px" width="17" height="17" viewBox="0 0 17 17"><rect x="0.5" y="0.5" width="15" height="12" fill="#fff" stroke="#7a7a7a"/><rect x="4.5" y="4.5" width="8" height="4" fill="#dedede"/><path d="M1 4.5H15M1 8.5H15M4.5 1V12M8.5 1V12M12.5 1V12" stroke="#c6c6c6" stroke-width="1"/>
<path d="M17 2L10.6 10.4L4 16.5" fill="none" stroke="#f3f3f3" stroke-width="4.6"/>
<path d="M16.6 2.4V6L12 11.2L9.8 9.2Z" fill="#7d7d7d"/>
<path d="M3.4 16.2C6 15.4 6.4 11 9.4 10.6C11.6 10.4 12.8 12.6 11.4 14.4C10 16.2 6.4 16.6 3.4 16.2Z" fill="#1e9b8c"/><circle cx="9.6" cy="12.6" r="1.1" fill="#fff"/></svg>
<svg class="a" style="left:597px;top:117px" width="17" height="17" viewBox="0 0 17 17"><rect x="0.5" y="0.5" width="15" height="12" fill="#fff" stroke="#7a7a7a"/><rect x="4.5" y="2.5" width="8" height="6" fill="#d6d6d6"/><path d="M1 4.5H15M1 8.5H15M4.5 1V12M8.5 1V12M12.5 1V12" stroke="#c6c6c6" stroke-width="1"/>
<path d="M17 2L10.6 10.4L4 16.5" fill="none" stroke="#f3f3f3" stroke-width="4.6"/>
<path d="M16.6 2.4V6L12 11.2L9.8 9.2Z" fill="#7d7d7d"/>
<path d="M3.4 16.2C6 15.4 6.4 11 9.4 10.6C11.6 10.4 12.8 12.6 11.4 14.4C10 16.2 6.4 16.6 3.4 16.2Z" fill="#1e9b8c"/><circle cx="9.6" cy="12.6" r="1.1" fill="#fff"/></svg>
<span class="t" style="left:616px;top:73px;font-size:12px;color:#262626;">Условное форматирование</span>
<svg class="a" style="left:771px;top:79px" width="5.4" height="3" viewBox="0 0 5.4 3"><path d="M0 0H5.4L2.7 3Z" fill="#777777"/></svg>
<span class="t" style="left:616px;top:96px;font-size:12px;color:#262626;">Форматировать как таблицу</span>
<svg class="a" style="left:773px;top:102px" width="5.4" height="3" viewBox="0 0 5.4 3"><path d="M0 0H5.4L2.7 3Z" fill="#777777"/></svg>
<span class="t" style="left:616.5px;top:119px;font-size:12px;color:#262626;transform:scaleX(0.9673);transform-origin:0 0;">Стили ячеек</span>
<svg class="a" style="left:687px;top:124px" width="5.4" height="3" viewBox="0 0 5.4 3"><path d="M0 0H5.4L2.7 3Z" fill="#777777"/></svg>
<svg class="a" style="left:806px;top:71px" width="17" height="16" viewBox="0 0 17 16"><path d="M0.5 0.5H8.5V3.5H0.5ZM4.5 0.5V3.5M0.5 9.5H8.5V15.5H0.5ZM4.5 9.5V15.5M0.5 12.5H8.5" fill="#fff" stroke="#727272"/>
<rect x="7.5" y="5" width="9" height="3.6" fill="#d9d9d9" stroke="#727272"/><path d="M12 5V8.6" stroke="#727272"/>
<path d="M6 6.8H1.4M3.6 4.3L1.1 6.8L3.6 9.3" fill="none" stroke="#1e9b8c" stroke-width="1.7"/></svg>
<svg class="a" style="left:806px;top:94px" width="18" height="16" viewBox="0 0 18 16"><path d="M0.5 0.5H8.5V3.5H0.5ZM4.5 0.5V3.5M0.5 11.5H8.5V15.5H0.5ZM4.5 11.5V15.5M0.5 11.5V8.5H4.5V11.5" fill="#fff" stroke="#727272"/>
<rect x="3.5" y="5.3" width="4.6" height="3" fill="#d9d9d9" stroke="#727272"/>
<path d="M9 3.4L15.6 10M15.6 3.4L9 10" stroke="#f4923c" stroke-width="1.9"/></svg>
<svg class="a" style="left:806px;top:116px" width="16" height="17" viewBox="0 0 16 17"><path d="M0.5 0.5V3.5M13.5 0.5V3.5" stroke="#1e9b8c" stroke-width="1"/><path d="M2.5 2H11.5" stroke="#1e9b8c" stroke-width="1.1"/><path d="M4 0.4L2 2L4 3.6ZM10 0.4L12 2L10 3.6Z" fill="#1e9b8c"/>
<rect x="0.5" y="5.5" width="14" height="11" fill="#fff" stroke="#727272"/><path d="M1 8.5H14M1 12.5H14M4 6V16M8 6V16M11.5 6V16" stroke="#c4c4c4" stroke-width="1"/><rect x="3.6" y="8" width="4.8" height="4.4" fill="#1e9b8c"/></svg>
<span class="t" style="left:825.5px;top:73px;font-size:12px;color:#262626;transform:scaleX(0.9337);transform-origin:0 0;">Вставить</span>
<svg class="a" style="left:883px;top:78px" width="5.4" height="3" viewBox="0 0 5.4 3"><path d="M0 0H5.4L2.7 3Z" fill="#777777"/></svg>
<span class="t" style="left:825px;top:96px;font-size:12px;color:#262626;transform:scaleX(0.9601);transform-origin:0 0;">Удалить</span>
<svg class="a" style="left:879px;top:101px" width="5.4" height="3" viewBox="0 0 5.4 3"><path d="M0 0H5.4L2.7 3Z" fill="#777777"/></svg>
<span class="t" style="left:825.5px;top:119px;font-size:12px;color:#262626;">Формат</span>
<svg class="a" style="left:871px;top:124px" width="5.4" height="3" viewBox="0 0 5.4 3"><path d="M0 0H5.4L2.7 3Z" fill="#777777"/></svg>
<svg class="a" style="left:917px;top:70px" width="16" height="16" viewBox="0 0 16 16"><path d="M14.4 4.2V1.9H2.2L8.4 8.4L2.2 15H14.4V12.6" fill="none" stroke="#2c4258" stroke-width="2.1" stroke-linejoin="miter"/></svg>
<svg class="a" style="left:939px;top:78px" width="5.4" height="3" viewBox="0 0 5.4 3"><path d="M0 0H5.4L2.7 3Z" fill="#777777"/></svg>
<span class="t" style="left:953px;top:69px;font-size:9.5px;color:#1e9b8c;font-weight:700;transform:scaleX(0.9455);transform-origin:0 0;">A</span>
<span class="t" style="left:953px;top:78px;font-size:9.5px;color:#727272;font-weight:700;transform:scaleX(0.9519);transform-origin:0 0;">Я</span>
<svg class="a" style="left:961px;top:76px" width="8" height="7" viewBox="0 0 8 7"><path d="M0 0H8L5 3.4V7H3V3.4Z" fill="#727272"/></svg>
<svg class="a" style="left:972px;top:78px" width="5.4" height="3" viewBox="0 0 5.4 3"><path d="M0 0H5.4L2.7 3Z" fill="#777777"/></svg>
<svg class="a" style="left:918px;top:94px" width="14" height="16" viewBox="0 0 14 16"><rect x="0.5" y="0.5" width="13" height="15" fill="#fff" stroke="#727272"/><rect x="0" y="0" width="14" height="3.6" fill="#6a6a6a"/><path d="M7 5.4V12.6M3.8 9.4L7 12.6L10.2 9.4" fill="none" stroke="#1e9b8c" stroke-width="2"/></svg>
<svg class="a" style="left:937px;top:101px" width="5.4" height="3" viewBox="0 0 5.4 3"><path d="M0 0H5.4L2.7 3Z" fill="#777777"/></svg>
<svg class="a" style="left:952px;top:95px" width="15" height="14" viewBox="0 0 15 14"><circle cx="9.9" cy="5.2" r="3.7" fill="#f8f8f8" stroke="#1e9b8c" stroke-width="1.5"/><path d="M7 8.2L2 12.2" stroke="#1e9b8c" stroke-width="2.4" stroke-linecap="butt"/></svg>
<svg class="a" style="left:972px;top:101px" width="5.4" height="3" viewBox="0 0 5.4 3"><path d="M0 0H5.4L2.7 3Z" fill="#777777"/></svg>
<svg class="a" style="left:918px;top:117px" width="14" height="14" viewBox="0 0 14 14"><path d="M8.8 0.8L13 5L6.4 11.6L2.2 7.4Z" fill="#f4923c"/><path d="M1.6 8L5.8 12.2L4.8 13.2H2.6L0.8 11.2Z" fill="#f7a95e"/><path d="M5 6L9 10M6.6 4.4L10.6 8.4M8.2 2.8L12.2 6.8" stroke="#fbd0a4" stroke-width="0.7" stroke-dasharray="1 1"/></svg>
<svg class="a" style="left:937px;top:124px" width="5.4" height="3" viewBox="0 0 5.4 3"><path d="M0 0H5.4L2.7 3Z" fill="#777777"/></svg>
<div class="a" style="left:0px;top:0px;width:1px;height:728px;background:#00743f;"></div>
<div class="a" style="left:1077px;top:0px;width:1px;height:728px;background:#00743f;"></div>
<div class="a" style="left:0px;top:727px;width:1078px;height:1px;background:#00743f;"></div>
</body></html>
